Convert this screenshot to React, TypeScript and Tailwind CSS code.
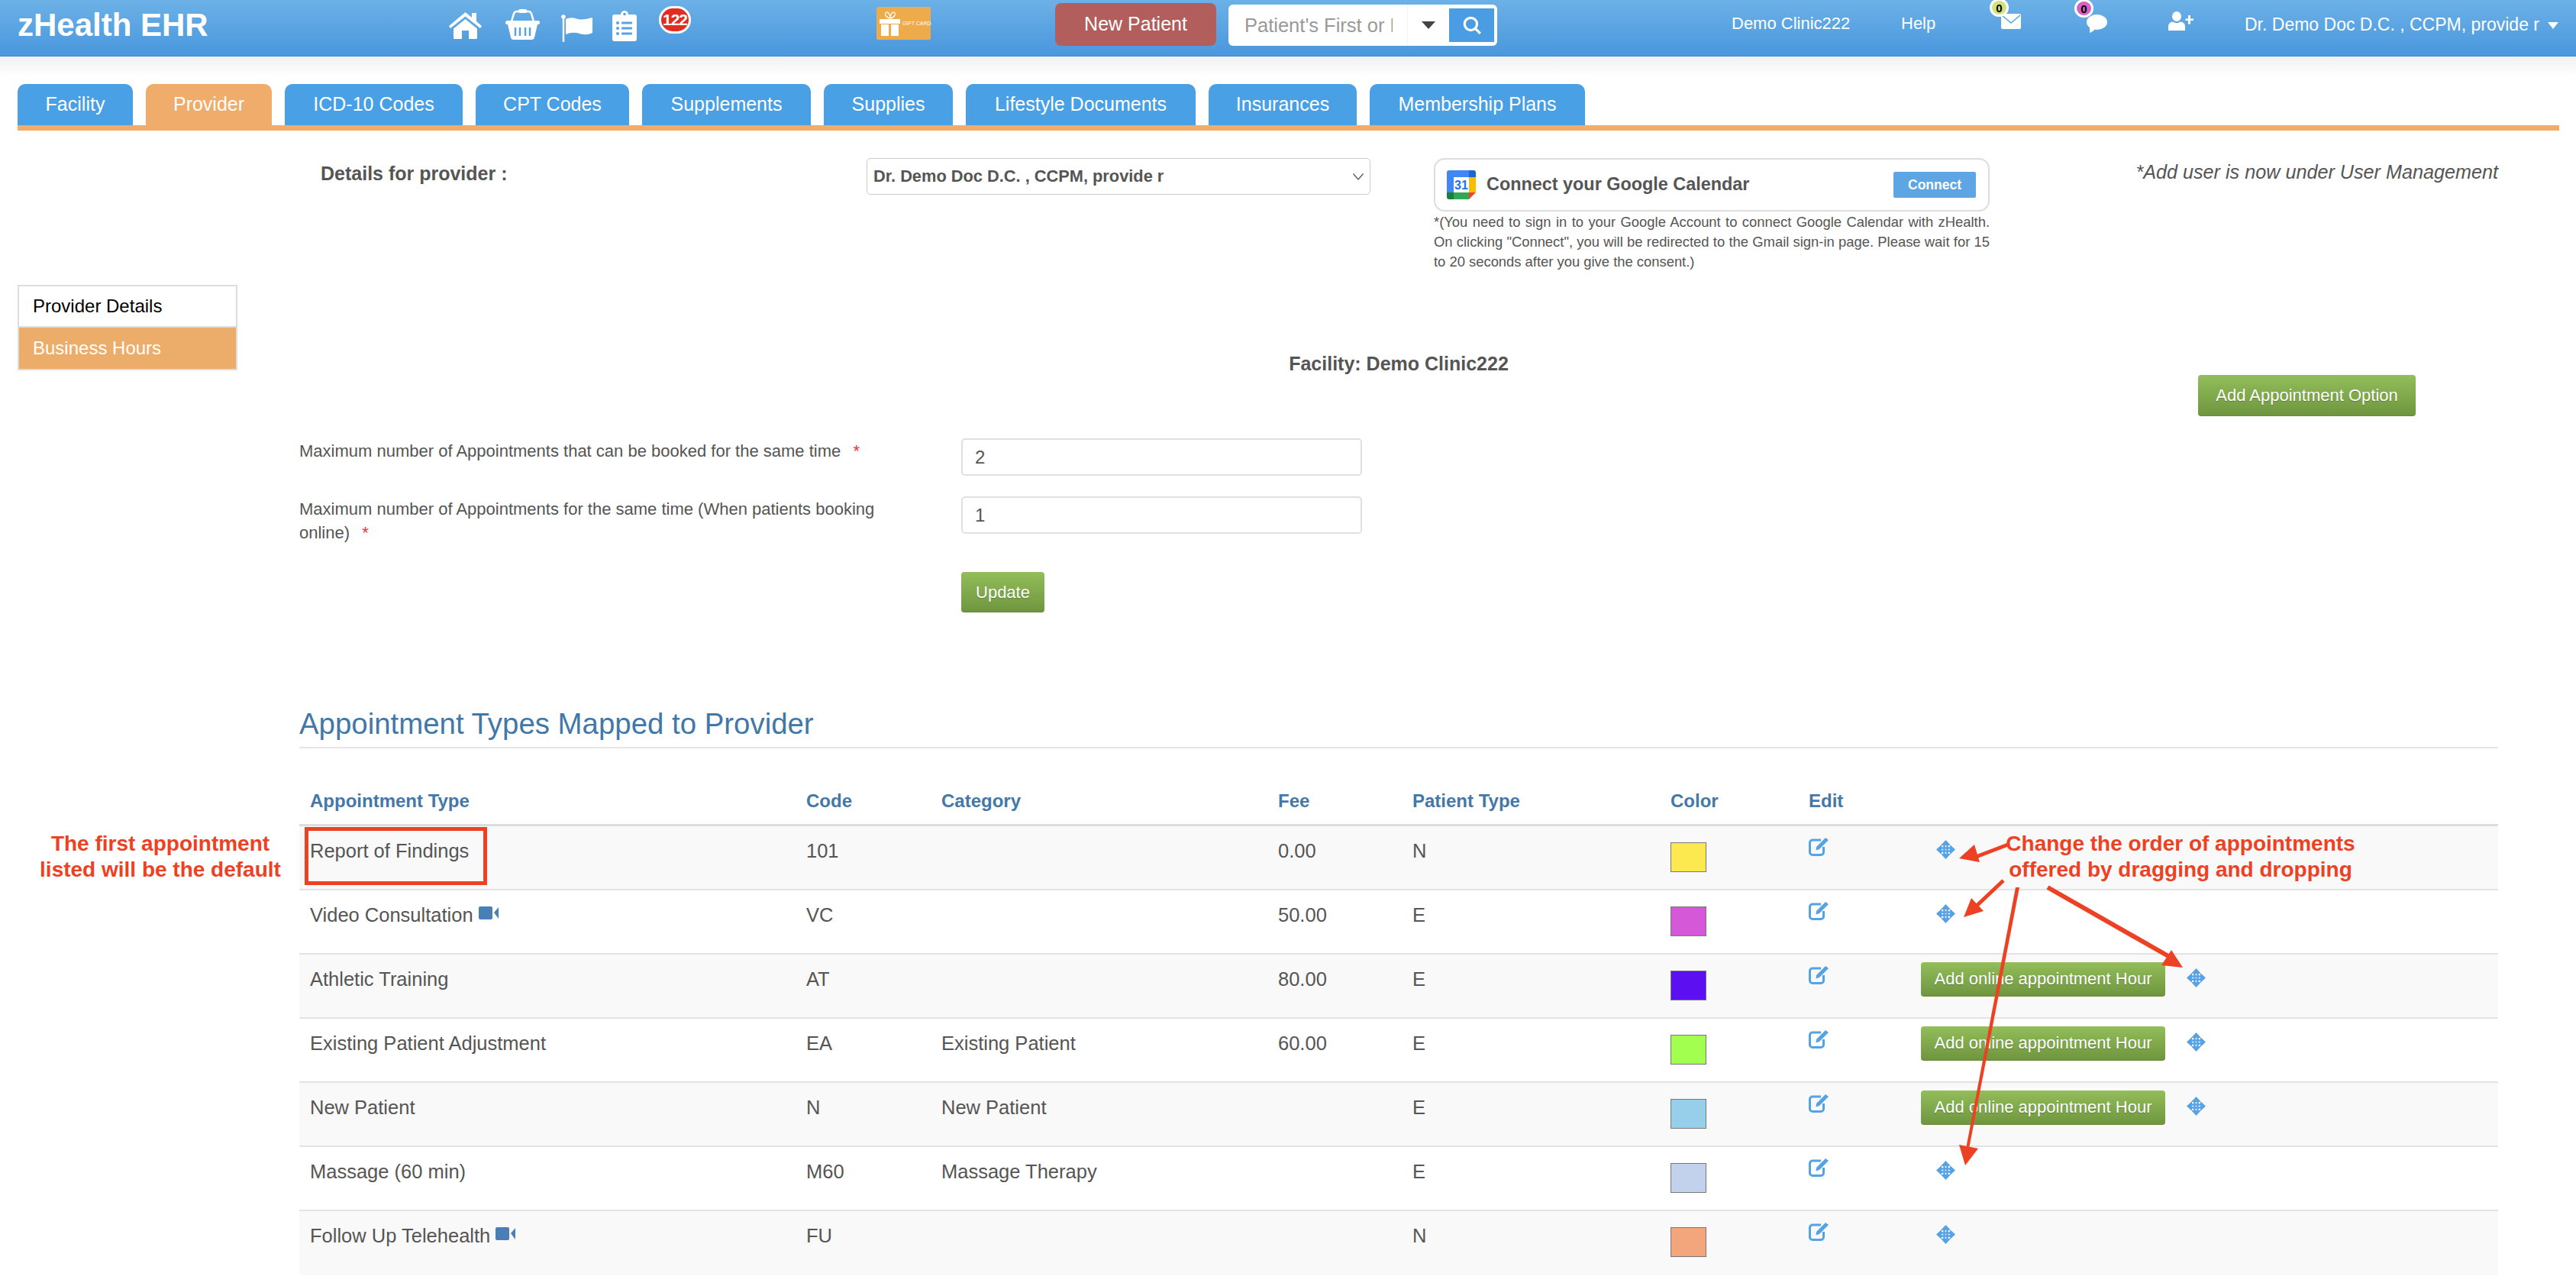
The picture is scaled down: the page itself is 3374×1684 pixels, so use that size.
const tabs = [
  { label: "Facility", w: "w-[151px]" },
  { label: "Provider", w: "w-[165px]", active: true },
  { label: "ICD-10 Codes", w: "w-[233px]" },
  { label: "CPT Codes", w: "w-[201px]" },
  { label: "Supplements", w: "w-[221px]" },
  { label: "Supplies", w: "w-[169px]" },
  { label: "Lifestyle Documents", w: "w-[301px]" },
  { label: "Insurances", w: "w-[194px]" },
  { label: "Membership Plans", w: "w-[282px]" },
];

const rows = [
  { name: "Report of Findings", code: "101", category: "", fee: "0.00", type: "N", color: "bg-[#fbe94f]" },
  { name: "Video Consultation", video: true, code: "VC", category: "", fee: "50.00", type: "E", color: "bg-[#d558d8]" },
  { name: "Athletic Training", code: "AT", category: "", fee: "80.00", type: "E", color: "bg-[#5c0ff0]", online: true },
  { name: "Existing Patient Adjustment", code: "EA", category: "Existing Patient", fee: "60.00", type: "E", color: "bg-[#a2ff4f]", online: true },
  { name: "New Patient", code: "N", category: "New Patient", fee: "", type: "E", color: "bg-[#97cee9]", online: true },
  { name: "Massage (60 min)", code: "M60", category: "Massage Therapy", fee: "", type: "E", color: "bg-[#c3d2ec]" },
  { name: "Follow Up Telehealth", video: true, code: "FU", category: "", fee: "", type: "N", color: "bg-[#f3a67c]" },
];

const HomeIcon = () => (
  <svg viewBox="0 0 43 35" className="w-[43px] h-[35px] fill-white">
    <path d="M21.5 0 L30 7 V1 H36 V12 L43 18 L41 21 L21.5 5.5 L2 21 L0 18 Z" />
    <path d="M21.5 9 L37 21.5 V34 a1 1 0 0 1 -1 1 H26 V24 H17 V35 H7 a1 1 0 0 1 -1 -1 V21.5 Z" />
  </svg>
);

const BasketIcon = () => (
  <svg viewBox="0 0 45 40" className="w-[45px] h-[40px]">
    <path d="M8 16 L11 6 Q12 3 15 3 H30 Q33 3 34 6 L37 16" fill="none" stroke="#fff" strokeWidth="2.5" />
    <rect x="17" y="0" width="11" height="5" rx="2" fill="#fff" />
    <rect x="0" y="15" width="45" height="5" rx="2.5" fill="#fff" />
    <path d="M3 20 H42 L38 37 Q37.500 40 34 40 H11 Q7.500 40 7 37 Z" fill="#fff" />
    <path d="M13 24 V35 M19 24 V35 M26 24 V35 M32 24 V35" stroke="#5aa2e2" strokeWidth="2.500" />
  </svg>
);

const FlagIcon = () => (
  <svg viewBox="0 0 41 36" className="w-[41px] h-[36px] fill-white">
    <circle cx="3" cy="3" r="2.800" />
    <rect x="1.800" y="3" width="2.400" height="33" rx="1" />
    <path d="M6 6 Q13 3 20 5.500 T41 4 V24 Q33 28 24 25 T6 26 Z" />
  </svg>
);

const ClipboardIcon = () => (
  <svg viewBox="0 0 32 41" className="w-[32px] h-[41px]">
    <path d="M3 6 H11 a5 5 0 0 1 10 0 H29 a3 3 0 0 1 3 3 V38 a3 3 0 0 1 -3 3 H3 a3 3 0 0 1 -3 -3 V9 a3 3 0 0 1 3 -3 Z" fill="#fff" />
    <circle cx="16" cy="5.500" r="1.800" fill="#5aa2e2" />
    <g fill="#5aa2e2">
      <circle cx="7" cy="17" r="2" /><rect x="12" y="15.500" width="14" height="3" rx="1" />
      <circle cx="7" cy="24" r="2" /><rect x="12" y="22.500" width="14" height="3" rx="1" />
      <circle cx="7" cy="31" r="2" /><rect x="12" y="29.500" width="14" height="3" rx="1" />
    </g>
  </svg>
);

const GiftCard = () => (
  <div className="w-[71px] h-[43px] mt-[9px] bg-[#eeab4c] rounded-[2px] flex items-center pl-[4px] gap-[2px]">
    <svg viewBox="0 0 28 32" className="w-[28px] h-[32px] flex-none">
      <path d="M14 9 C8 8 6 3 9 1 C12 0 14 5 14 9 C14 5 16 0 19 1 C22 3 20 8 14 9" fill="none" stroke="#fff" strokeWidth="1.200" />
      <rect x="0" y="10" width="27" height="6" fill="#fff" />
      <rect x="2" y="17" width="10" height="15" fill="#fff" />
      <rect x="15" y="17" width="10" height="15" fill="#fff" />
    </svg>
    <span className="text-[7px] leading-none text-white whitespace-nowrap">GIFT CARD</span>
  </div>
);

const MailIcon = () => (
  <svg viewBox="0 0 26 20" className="w-[26px] h-[20px]">
    <rect width="26" height="20" rx="2" fill="#fff" />
    <path d="M1 2 L13 12 L25 2" fill="none" stroke="#5aa2e2" strokeWidth="1.600" />
  </svg>
);

const ChatIcon = () => (
  <svg viewBox="0 0 28 24" className="w-[28px] h-[24px] fill-white">
    <ellipse cx="14.500" cy="10" rx="13.500" ry="10" />
    <path d="M5 16 L5 24 Q11 22 13 17 Z" />
  </svg>
);

const AddUserIcon = () => (
  <svg viewBox="0 0 33 25" className="w-[33px] h-[25px] fill-white">
    <ellipse cx="11" cy="6.500" rx="6" ry="6.500" />
    <path d="M0 25 V20 Q0 14 6 13.500 Q11 17 16 13.500 Q22 14 22 20 V25 Z" />
    <path d="M26 5 H29 V9.500 H33 V12 H29 V16.500 H26 V12 H22.500 V9.500 H26 Z" />
  </svg>
);

const Badge = ({ color }: { color: string }) => (
  <span className={`absolute -top-[20px] -left-[15px] w-[25px] h-[24px] rounded-full border-[3px] border-white ${color} text-black text-[15px] font-bold leading-none flex items-center justify-center`}>
    0
  </span>
);

const GoogleCalendarIcon = () => (
  <svg viewBox="0 0 38 38" className="w-[38px] h-[38px] flex-none">
    <path d="M3 0 H29 V9 H9 V29 H0 V3 a3 3 0 0 1 3 -3 Z" fill="#4285f4" />
    <path d="M29 0 H35 a3 3 0 0 1 3 3 V9 H29 Z" fill="#1967d2" />
    <rect x="29" y="9" width="9" height="20" fill="#fbbc04" />
    <rect x="9" y="29" width="20" height="9" fill="#34a853" />
    <path d="M0 29 H9 V38 H3 a3 3 0 0 1 -3 -3 Z" fill="#188038" />
    <path d="M29 29 H38 L29 38 Z" fill="#ea4335" />
    <rect x="9" y="9" width="20" height="20" fill="#fff" />
    <text x="19" y="25" textAnchor="middle" fontSize="16" fontWeight="700" fill="#1a73e8" fontFamily="Liberation Sans, sans-serif">31</text>
  </svg>
);

const EditIcon = () => (
  <svg viewBox="0 0 26 24" className="w-[26px] h-[24px] block">
    <path d="M16 3 H5 a3.500 3.500 0 0 0 -3.500 3.500 V19 a3.500 3.500 0 0 0 3.500 3.500 H16 a3.500 3.500 0 0 0 3.500 -3.500 V12" fill="none" stroke="#55a3e6" strokeWidth="3" />
    <path d="M22 0 L26 3 L14 15 L9.500 16.500 L10 12 Z" fill="#55a3e6" />
  </svg>
);

const MoveIcon = () => (
  <svg viewBox="0 0 25 25" className="w-[25px] h-[25px] block" fill="#55a3e6">
    <path d="M12.500 0 L19 7 H6 Z M12.500 25 L19 18 H6 Z M0 12.500 L7 6 V19 Z M25 12.500 L18 6 V19 Z" />
    <path d="M10.500 6 V19 M14.500 6 V19 M6 10.500 H19 M6 14.500 H19" stroke="#55a3e6" strokeWidth="2.400" fill="none" />
  </svg>
);

const VideoIcon = () => (
  <svg viewBox="0 0 26 17" className="inline-block w-[26px] h-[17px] ml-[7px] align-[3px]" fill="#4a7fb5">
    <rect width="18" height="17" rx="2" />
    <path d="M20 8 L26 1 V16 Z" />
  </svg>
);

const greenBtn = "bg-linear-to-b from-[#93be5a] to-[#6f963f] border-b border-[#668a3a] rounded-[4px] text-white text-[22px] [text-shadow:0_1px_1px_rgba(0,0,0,0.25)]";

export default function App() {
  return (
    <div className="relative w-full h-[1684px] overflow-hidden bg-white text-[#555] font-['Liberation_Sans',Arial,sans-serif]">
      {/* top bar */}
      <header className="h-[74px] flex items-start whitespace-nowrap bg-linear-to-b from-[#6cb1e7] to-[#4997dd] border-b border-[#4488cc] text-white">
        <div className="w-[588px] pl-[23px] pt-[9px] text-[42px] leading-[48px] font-bold">zHealth EHR</div>
        <div className="mt-[16px]"><HomeIcon /></div>
        <div className="mt-[12px] ml-[31px]"><BasketIcon /></div>
        <div className="mt-[19px] ml-[28px]"><FlagIcon /></div>
        <div className="mt-[13px] ml-[26px]"><ClipboardIcon /></div>
        <div className="mt-[8px] ml-[29px] w-[42px] h-[36px] rounded-full bg-[#e32c20] border-[3px] border-white text-[21px] font-bold leading-[30px] text-center tracking-[-1px]">122</div>
        <div className="ml-[243px]"><GiftCard /></div>
        <button className="ml-[163px] mt-[4px] w-[211px] h-[56px] rounded-[8px] bg-[#b25e5c] text-[25px] text-white">New Patient</button>
        <div className="ml-[16px] mt-[6px] w-[352px] h-[54px] bg-white rounded-[6px] flex items-center">
          <div className="w-[235px] h-full pl-[21px] pr-[19px] border-r border-[#f2f2f2] flex items-center">
            <input readOnly placeholder="Patient's First or Last Name" className="w-full min-w-0 outline-none text-[25.500px] placeholder:text-[#999] bg-transparent" />
          </div>
          <div className="w-[54px] flex justify-center">
            <div className="w-0 h-0 border-l-[9px] border-r-[9px] border-t-[10px] border-l-transparent border-r-transparent border-t-[#444]" />
          </div>
          <div className="w-[59px] h-[44px] bg-[#4a9ce3] flex items-center justify-center">
            <svg viewBox="0 0 24 24" className="w-[26px] h-[26px]" fill="none" stroke="#fff" strokeWidth="3"><circle cx="10.500" cy="10.500" r="7.500" /><path d="M16 16 L22 22" /></svg>
          </div>
        </div>
        <div className="ml-[307px] mt-[18px] text-[22px] leading-[25px] w-[153px]">Demo Clinic222</div>
        <div className="ml-[69px] mt-[18px] text-[22px] leading-[25px] w-[44px]">Help</div>
        <div className="relative ml-[87px] mt-[18px]"><MailIcon /><Badge color="bg-[#d4e27d]" /></div>
        <div className="relative ml-[85px] mt-[19px]"><ChatIcon /><Badge color="bg-[#d462c4]" /></div>
        <div className="ml-[80px] mt-[15px]"><AddUserIcon /></div>
        <div className="ml-[67px] mt-[20px] text-[23px] leading-[25px] w-[390px]">Dr. Demo Doc D.C. , CCPM, provide r</div>
        <div className="ml-[7px] mt-[29px] w-0 h-0 border-l-[7px] border-r-[7px] border-t-[9px] border-l-transparent border-r-transparent border-t-white" />
      </header>
      <div className="h-[26px] bg-linear-to-b from-[#f1f1f1] to-white" />

      {/* tabs */}
      <nav className="mt-[10px] ml-[23px] w-[3329px] flex gap-[17px] border-b-[7px] border-[#efac6a]">
        {tabs.map((tab) => (
          <div
            key={tab.label}
            className={`${tab.w} h-[54px] rounded-t-[10px] flex items-center justify-center text-white text-[25px] ${tab.active ? "bg-[#efac6a]" : "bg-[#49a0e5]"}`}
          >
            {tab.label}
          </div>
        ))}
      </nav>

      <div className="flex">
        {/* side menu */}
        <aside className="w-[392px] flex-none pl-[23px] pt-[202px]">
          <div className="w-[288px] border-2 border-[#ddd] text-[24px]">
            <div className="h-[54px] pl-[18px] flex items-center text-black bg-white border-b-2 border-[#ddd]">Provider Details</div>
            <div className="h-[54px] pl-[18px] flex items-center text-white bg-[#ecad6b]">Business Hours</div>
          </div>
        </aside>

        <main className="w-[2880px] flex-none">
          {/* provider row */}
          <div className="mt-[36px] flex items-start h-[213px]">
            <div className="w-[743px] pl-[28px] pt-[6px] text-[25px] leading-[29px] font-bold">Details for provider :</div>
            <div className="w-[660px] h-[48px] border border-[#ccc] rounded-[5px] flex items-center justify-between pl-[8px] pr-[8px] text-[21.800px] font-bold">
              <span>Dr. Demo Doc D.C. , CCPM, provide r</span>
              <svg viewBox="0 0 14 9" className="w-[14px] h-[9px]" fill="none" stroke="#555" strokeWidth="1.300"><path d="M0.500 0.500 L7 8 L13.500 0.500" /></svg>
            </div>
            <div className="ml-[83px] w-[728px]">
              <div className="h-[70px] border-2 border-[#ddd] rounded-[14px] flex items-center pl-[15px] pr-[16px]">
                <GoogleCalendarIcon />
                <span className="ml-[14px] text-[23.400px] font-bold">Connect your Google Calendar</span>
                <button className="ml-auto w-[108px] h-[34px] bg-[#5ea6e3] rounded-[2px] text-white text-[17.500px] font-bold">Connect</button>
              </div>
              <div className="mt-[1px] text-[18.400px] leading-[26px]">
                <p className="[text-align-last:justify] whitespace-nowrap">*(You need to sign in to your Google Account to connect Google Calendar with zHealth.</p>
                <p className="[text-align-last:justify] whitespace-nowrap">On clicking "Connect", you will be redirected to the Gmail sign-in page. Please wait for 15</p>
                <p>to 20 seconds after you give the consent.)</p>
              </div>
            </div>
            <div className="flex-1 pt-[4px] text-right italic text-[25.200px] leading-[29px]">*Add user is now under User Management</div>
          </div>

          <div className="mt-[42px] text-center text-[25px] leading-[29px] font-bold">Facility: Demo Clinic222</div>
          <div className="flex justify-end pr-[108px]">
            <button className={`${greenBtn} w-[285px] h-[54px]`}>Add Appointment Option</button>
          </div>

          {/* limits form */}
          <div className="mt-[29px] flex items-start h-[49px]">
            <label className="w-[867px] pr-[100px] pt-[1px] text-[22px] leading-[31px]">Maximum number of Appointments that can be booked for the same time <span className="text-red-500 ml-[10px]">*</span></label>
            <input readOnly value="2" className="w-[525px] h-[49px] border-2 border-[#e0e0e0] rounded-[5px] pl-[16px] text-[24px] text-[#555] outline-none" />
          </div>
          <div className="mt-[27px] flex items-start h-[49px]">
            <label className="w-[867px] pr-[100px] pt-[1px] text-[22px] leading-[31px]">Maximum number of Appointments for the same time (When patients booking online) <span className="text-red-500 ml-[10px]">*</span></label>
            <input readOnly value="1" className="w-[525px] h-[49px] border-2 border-[#e0e0e0] rounded-[5px] pl-[16px] text-[24px] text-[#555] outline-none" />
          </div>
          <div className="mt-[50px] pl-[867px]">
            <button className={`${greenBtn} w-[109px] h-[53px]`}>Update</button>
          </div>

          {/* appointment types */}
          <h2 className="mt-[123px] pb-[7px] border-b-2 border-[#e5e5e5] text-[38.400px] leading-[46px] text-[#4278a8]">Appointment Types Mapped to Provider</h2>
          <table className="w-full table-fixed border-separate border-spacing-0">
            <colgroup>
              <col className="w-[650px]" /><col className="w-[177px]" /><col className="w-[441px]" /><col className="w-[176px]" /><col className="w-[338px]" /><col className="w-[181px]" /><col className="w-[147px]" /><col />
            </colgroup>
            <thead>
              <tr className="text-[#4478a8] text-[24px] font-bold text-left">
                {["Appointment Type", "Code", "Category", "Fee", "Patient Type", "Color", "Edit", ""].map((h, i) => (
                  <th key={i} className="h-[102px] align-bottom pl-[14px] pb-[16px] leading-[28px] border-b-[3px] border-[#ddd]">{h}</th>
                ))}
              </tr>
            </thead>
            <tbody className="text-[25.500px] leading-[30px]">
              {rows.map((r, i) => {
                const cell = `h-[84px] align-top pl-[14px] ${i % 2 === 0 ? "bg-[#f9f9f9]" : "bg-white"} ${i < rows.length - 1 ? "border-b-2 border-[#e3e3e3]" : ""}`;
                return (
                  <tr key={r.name}>
                    <td className={`${cell} pt-[17px]`}>
                      {r.name}
                      {r.video && <VideoIcon />}
                    </td>
                    <td className={`${cell} pt-[17px]`}>{r.code}</td>
                    <td className={`${cell} pt-[17px]`}>{r.category}</td>
                    <td className={`${cell} pt-[17px]`}>{r.fee}</td>
                    <td className={`${cell} pt-[17px]`}>{r.type}</td>
                    <td className={`${cell} pt-[21px]`}>
                      <div className={`w-[47px] h-[39px] border border-[#777] ${r.color}`} />
                    </td>
                    <td className={`${cell} pt-[15px]`}><EditIcon /></td>
                    <td className={`${cell} pt-[10px]`}>
                      {r.online ? (
                        <div className="flex items-start">
                          <button className={`${greenBtn} w-[320px] h-[45px]`}>Add online appointment Hour</button>
                          <div className="ml-[28px] mt-[8px]"><MoveIcon /></div>
                        </div>
                      ) : (
                        <div className="ml-[20px] mt-[8px]"><MoveIcon /></div>
                      )}
                    </td>
                  </tr>
                );
              })}
            </tbody>
          </table>
        </main>
      </div>

      {/* red annotations pasted over the page */}
      <div className="absolute left-[399px] top-[1083px] w-[239px] h-[76px] border-[5px] border-[#ed4123]" />
      <div className="absolute left-[30px] top-[1088px] w-[360px] text-center text-[28px] leading-[34px] font-bold text-[#ed4123]">
        The first appointment<br />listed will be the default
      </div>
      <div className="absolute left-[2606px] top-[1088px] w-[500px] text-center text-[28px] leading-[34px] font-bold text-[#ed4123]">
        Change the order of appointments<br />offered by dragging and dropping
      </div>
      <svg className="absolute left-0 top-0 w-[3374px] h-[1684px] pointer-events-none" viewBox="0 0 3374 1684" fill="#ed4123" stroke="none">
        <path d="M2630 1106 L2588 1122" stroke="#ed4123" strokeWidth="5" />
        <path d="M2566 1124 L2586 1106 L2593 1129 Z" />
        <path d="M2624 1153 L2588 1187" stroke="#ed4123" strokeWidth="5" />
        <path d="M2572 1201 L2582 1176 L2598 1193 Z" />
        <path d="M2682 1162 L2840 1252" stroke="#ed4123" strokeWidth="6" />
        <path d="M2859 1267 L2844 1244 L2831 1264 Z" />
        <path d="M2640 1162 L2645 1162 L2579 1504 L2575 1504 Z" />
        <path d="M2574 1526 L2566 1499 L2591 1504 Z" />
      </svg>
    </div>
  );
}
